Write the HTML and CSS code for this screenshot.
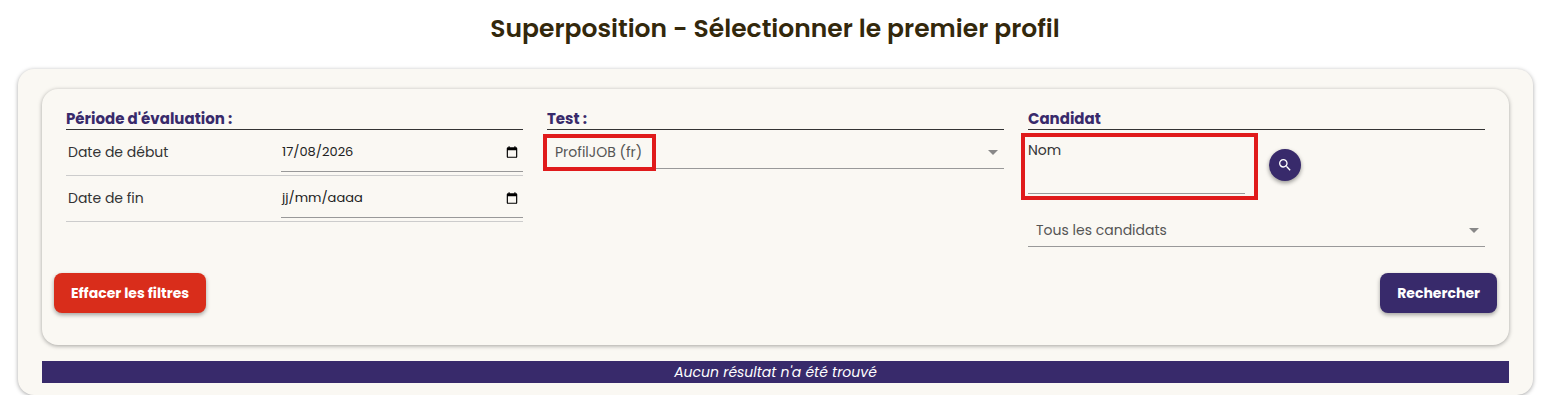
FILE: index.html
```html
<!DOCTYPE html>
<html lang="fr">
<head>
    <meta charset="UTF-8">
    <title>Superposition</title>
    <link rel="stylesheet" href="styles.css">
</head>
<body>
    <h1 class="page-title">Superposition - Sélectionner le premier profil</h1>
    <div class="outer-card">
        <div class="filter-card">
            <div class="filter-columns">
                <div class="filter-col">
                    <div class="col-title">Période d'évaluation :</div>
                    <div class="date-row">
                        <span class="date-label">Date de début</span>
                        <div class="date-input"><span>17/08/2026</span><svg class="cal" viewBox="0 0 24 24"><path d="M19 4h-1V2h-2v2H8V2H6v2H5a2 2 0 0 0-2 2v14a2 2 0 0 0 2 2h14a2 2 0 0 0 2-2V6a2 2 0 0 0-2-2zm0 16H5V9h14z"/></svg></div>
                    </div>
                    <div class="date-row">
                        <span class="date-label">Date de fin</span>
                        <div class="date-input"><span>jj/mm/aaaa</span><svg class="cal" viewBox="0 0 24 24"><path d="M19 4h-1V2h-2v2H8V2H6v2H5a2 2 0 0 0-2 2v14a2 2 0 0 0 2 2h14a2 2 0 0 0 2-2V6a2 2 0 0 0-2-2zm0 16H5V9h14z"/></svg></div>
                    </div>
                </div>
                <div class="filter-col">
                    <div class="col-title">Test :</div>
                    <div class="select-line test-select"><span>ProfilJOB (fr)</span><i class="arrow"></i></div>
                    <div class="mark mark-test"></div>
                </div>
                <div class="filter-col">
                    <div class="col-title">Candidat</div>
                    <div class="name-row">
                        <div class="name-field">Nom</div>
                        <button class="search-btn"><svg viewBox="0 0 24 24"><path d="M15.5 14h-.79l-.28-.27A6.47 6.47 0 0 0 16 9.5 6.5 6.5 0 1 0 9.5 16c1.61 0 3.09-.59 4.23-1.57l.27.28v.79l5 4.99L20.49 19zm-6 0C7.01 14 5 11.99 5 9.5S7.01 5 9.5 5 14 7.01 14 9.5 11.99 14 9.5 14z"/></svg></button>
                    </div>
                    <div class="select-line cand-select"><span>Tous les candidats</span><i class="arrow"></i></div>
                    <div class="mark mark-name"></div>
                </div>
            </div>
            <div class="filter-actions">
                <button class="btn btn-red">Effacer les filtres</button>
                <button class="btn btn-purple">Rechercher</button>
            </div>
        </div>
        <div class="no-result">Aucun résultat n'a été trouvé</div>
    </div>
</body>
</html>
```
FILE: styles.css
```css
body {
    margin: 0;
    background: #fff;
    font-family: "Poppins", "Open Sans", "Noto Sans", sans-serif;
    color: #333;
}
.page-title {
    margin: 0;
    padding-top: 11px;
    height: 58px;
    box-sizing: border-box;
    text-align: center;
    font-size: 25px;
    line-height: 36px;
    font-weight: 600;
    color: #33280c;
}
.outer-card {
    margin: 11px 17px 0 18px;
    padding: 20px 24px 12px;
    height: 326px;
    box-sizing: border-box;
    background: #faf8f3;
    border-radius: 16px;
    box-shadow: 0 1px 4px rgba(0,0,0,0.35);
}
.filter-card {
    height: 256px;
    box-sizing: border-box;
    padding: 20px 12px 0;
    background: #faf8f3;
    border-radius: 16px;
    box-shadow: 0 1px 4px rgba(0,0,0,0.35);
}
.filter-columns {
    display: flex;
    gap: 24px;
    height: 164px;
    padding: 0 12px;
}
.filter-col {
    flex: 1;
    position: relative;
}
.col-title {
    font-size: 15px;
    line-height: 20px;
    font-weight: 700;
    color: #382a6b;
    border-bottom: 1px solid #333;
}
.date-row {
    display: flex;
    align-items: center;
    height: 45px;
    padding-left: 2px;
    border-bottom: 1px solid #ccc;
    font-size: 14px;
}
.date-label {
    width: 213px;
}
.date-input {
    flex: 1;
    display: flex;
    justify-content: space-between;
    align-items: center;
    height: 37px;
    padding: 0 4px 0 1px;
    border-bottom: 1px solid #999;
    font-size: 13px;
    color: #222;
}
.cal {
    width: 14px;
    height: 14px;
}
.select-line {
    display: flex;
    justify-content: space-between;
    align-items: center;
    height: 32px;
    padding: 0 6px 0 8px;
    border-bottom: 1px solid #999;
    font-size: 14px;
    color: #555;
}
.test-select {
    margin-top: 6px;
}
.cand-select {
    margin-top: 20px;
}
.arrow {
    width: 0;
    height: 0;
    border-left: 5px solid transparent;
    border-right: 5px solid transparent;
    border-top: 5px solid #888;
}
.name-row {
    display: flex;
    align-items: center;
    gap: 24px;
}
.name-field {
    width: 217px;
    height: 57px;
    margin-top: 6px;
    border-bottom: 1px solid #999;
    font-size: 14px;
    line-height: 29px;
}
.search-btn {
    width: 32px;
    height: 32px;
    padding: 8px;
    border: none;
    border-radius: 50%;
    background: #382a6b;
    box-shadow: 0 2px 4px rgba(0,0,0,0.4);
    margin-top: 6px;
}
.search-btn svg {
    display: block;
    width: 16px;
    height: 16px;
    fill: #fff;
}
.filter-actions {
    display: flex;
    justify-content: space-between;
}
.btn {
    height: 40px;
    padding: 0 17px;
    border: none;
    border-radius: 8px;
    color: #fff;
    font-family: inherit;
    font-size: 14px;
    font-weight: 700;
    box-shadow: 0 2px 4px rgba(0,0,0,0.35);
}
.btn-red {
    background: #d92d1b;
}
.btn-purple {
    background: #382a6b;
}
.no-result {
    margin-top: 16px;
    height: 22px;
    line-height: 22px;
    background: #382a6b;
    color: #fff;
    text-align: center;
    font-style: italic;
    font-size: 14px;
}
.mark {
    position: absolute;
    border: 4px solid #e01b1b;
    box-sizing: border-box;
}
.mark-test {
    left: -4px;
    top: 25px;
    width: 113px;
    height: 37px;
}
.mark-name {
    left: -7px;
    top: 24px;
    width: 237px;
    height: 67px;
}
```
